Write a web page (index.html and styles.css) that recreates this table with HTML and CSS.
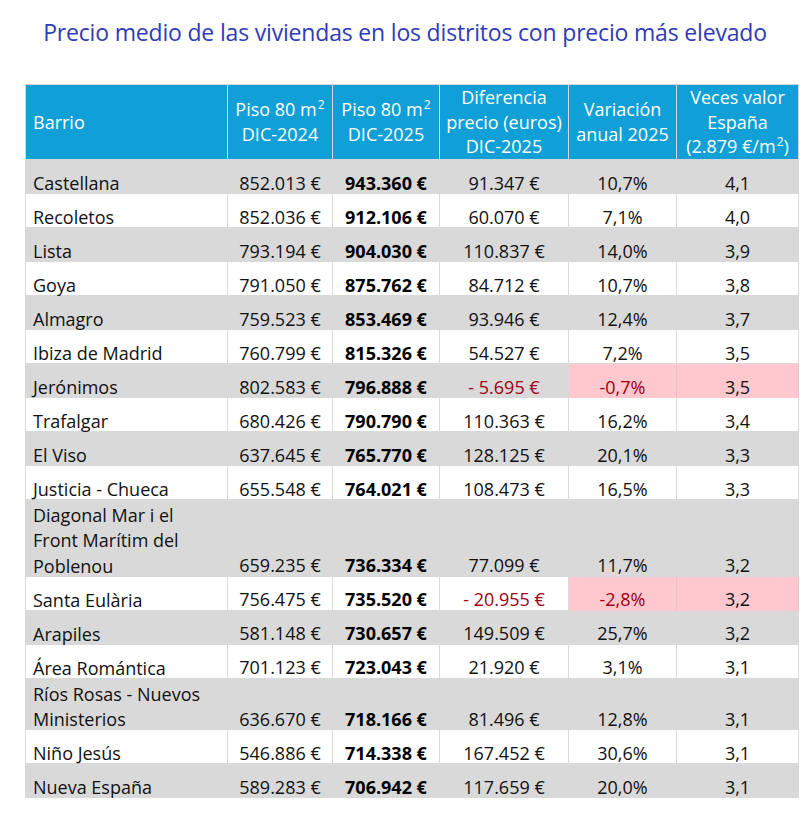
FILE: index.html
```html
<!DOCTYPE html>
<html lang="es">
<head>
<meta charset="utf-8">
<title>Precio medio de las viviendas</title>
<link rel="stylesheet" href="styles.css">
</head>
<body>
<div class="page">
  <h1 class="title">Precio medio de las viviendas en los distritos con precio más elevado</h1>
  <table class="data">
    <colgroup>
      <col class="c1"><col class="c2"><col class="c3"><col class="c4"><col class="c5"><col class="c6">
    </colgroup>
    <thead>
      <tr>
        <th class="left">Barrio</th>
        <th>Piso 80 m<sup>2</sup><br>DIC-2024</th>
        <th>Piso 80 m<sup>2</sup><br>DIC-2025</th>
        <th>Diferencia precio (euros) DIC-2025</th>
        <th>Variación anual 2025</th>
        <th>Veces valor España (2.879 €/m<sup>2</sup>)</th>
      </tr>
    </thead>
    <tbody>
      <tr class="g"><td class="left">Castellana</td><td>852.013 €</td><td class="b">943.360 €</td><td>91.347 €</td><td>10,7%</td><td>4,1</td></tr>
      <tr><td class="left">Recoletos</td><td>852.036 €</td><td class="b">912.106 €</td><td>60.070 €</td><td>7,1%</td><td>4,0</td></tr>
      <tr class="g"><td class="left">Lista</td><td>793.194 €</td><td class="b">904.030 €</td><td>110.837 €</td><td>14,0%</td><td>3,9</td></tr>
      <tr><td class="left">Goya</td><td>791.050 €</td><td class="b">875.762 €</td><td>84.712 €</td><td>10,7%</td><td>3,8</td></tr>
      <tr class="g"><td class="left">Almagro</td><td>759.523 €</td><td class="b">853.469 €</td><td>93.946 €</td><td>12,4%</td><td>3,7</td></tr>
      <tr><td class="left">Ibiza de Madrid</td><td>760.799 €</td><td class="b">815.326 €</td><td>54.527 €</td><td>7,2%</td><td>3,5</td></tr>
      <tr class="g"><td class="left">Jerónimos</td><td>802.583 €</td><td class="b">796.888 €</td><td class="neg">- 5.695 €</td><td class="bad neg">-0,7%</td><td class="bad">3,5</td></tr>
      <tr><td class="left">Trafalgar</td><td>680.426 €</td><td class="b">790.790 €</td><td>110.363 €</td><td>16,2%</td><td>3,4</td></tr>
      <tr class="g"><td class="left">El Viso</td><td>637.645 €</td><td class="b">765.770 €</td><td>128.125 €</td><td>20,1%</td><td>3,3</td></tr>
      <tr><td class="left">Justicia - Chueca</td><td>655.548 €</td><td class="b">764.021 €</td><td>108.473 €</td><td>16,5%</td><td>3,3</td></tr>
      <tr class="g"><td class="left">Diagonal Mar i el Front Marítim del Poblenou</td><td>659.235 €</td><td class="b">736.334 €</td><td>77.099 €</td><td>11,7%</td><td>3,2</td></tr>
      <tr><td class="left">Santa Eulària</td><td>756.475 €</td><td class="b">735.520 €</td><td class="neg">- 20.955 €</td><td class="bad neg">-2,8%</td><td class="bad">3,2</td></tr>
      <tr class="g"><td class="left">Arapiles</td><td>581.148 €</td><td class="b">730.657 €</td><td>149.509 €</td><td>25,7%</td><td>3,2</td></tr>
      <tr><td class="left">Área Romántica</td><td>701.123 €</td><td class="b">723.043 €</td><td>21.920 €</td><td>3,1%</td><td>3,1</td></tr>
      <tr class="g"><td class="left">Ríos Rosas - Nuevos Ministerios</td><td>636.670 €</td><td class="b">718.166 €</td><td>81.496 €</td><td>12,8%</td><td>3,1</td></tr>
      <tr><td class="left">Niño Jesús</td><td>546.886 €</td><td class="b">714.338 €</td><td>167.452 €</td><td>30,6%</td><td>3,1</td></tr>
      <tr class="g"><td class="left">Nueva España</td><td>589.283 €</td><td class="b">706.942 €</td><td>117.659 €</td><td>20,0%</td><td>3,1</td></tr>
    </tbody>
  </table>
</div>
</body>
</html>
```
FILE: styles.css
```css
html, body {
  margin: 0;
  padding: 0;
  background: #ffffff;
}
.page {
  padding: 0 12px 0 25px;
  font-family: "Open Sans", "Liberation Sans", sans-serif;
}
.title {
  margin: 0 -12px 0 -25px;
  padding: 16px 0 0 0;
  height: 84px;
  box-sizing: border-box;
  text-align: center;
  font-family: "Open Sans", "Liberation Sans", sans-serif;
  font-weight: 400;
  font-size: 23px;
  letter-spacing: -0.18px;
  line-height: 32px;
  color: #2f3cb8;
}
.data {
  border-collapse: collapse;
  table-layout: fixed;
  width: 773px;
  font-size: 18px;
  line-height: 25.5px;
  color: #111111;
}
.c1 { width: 202px; }
.c2 { width: 105px; }
.c3 { width: 107px; }
.c4 { width: 129px; }
.c5 { width: 108px; }
.c6 { width: 122px; }
.data th {
  background: #109fd6;
  color: #ffffff;
  font-weight: 400;
  text-align: center;
  vertical-align: middle;
  padding: 0 4px;
  border: 1px solid #d6d6d6;
  height: 74px;
  line-height: 24.7px;
}
.data th.left,
.data td.left {
  text-align: left;
  padding-left: 7px;
}
.data sup {
  font-size: 12px;
  line-height: 0;
  vertical-align: 7px;
  margin-left: 1px;
}
.data td {
  height: 30px;
  padding: 3px 4px 0 4px;
  text-align: center;
  vertical-align: bottom;
  border: 1px solid #d9d9d9;
  background: #ffffff;
}
.data td::after {
  content: "";
  display: block;
  height: 0;
  margin-top: -3px;
}
.data tr.g td {
  background: #d9d9d9;
}
.data td.left {
  line-height: 25.2px;
}
.data td.b {
  font-weight: 700;
  color: #000000;
}
.data td.neg {
  color: #a00010;
}
.data tr td.bad {
  background: #ffc7ce;
  border-color: #ffc7ce #e8c0c6;
}
```
